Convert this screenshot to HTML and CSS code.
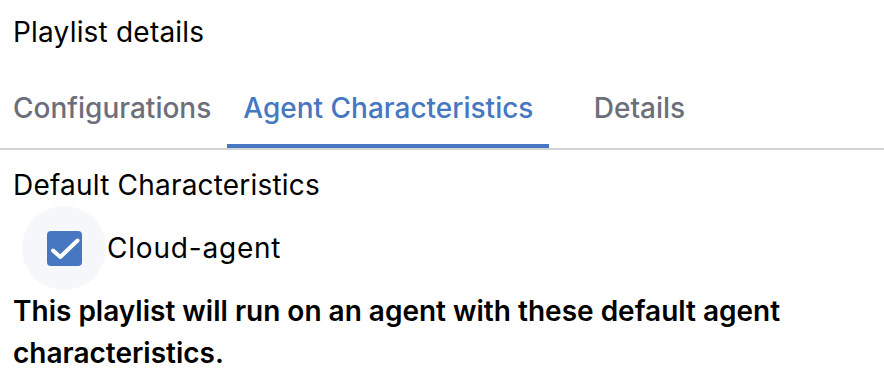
FILE: index.html
```html
<!DOCTYPE html>
<html lang="en">
<head>
    <meta charset="UTF-8">
    <meta name="viewport" content="width=device-width, initial-scale=1.0">
    <title>Playlist details</title>
    <link rel="stylesheet" href="styles.css">
</head>
<body>
    <div class="panel">
        <h1 class="title">Playlist details</h1>

        <div class="tabs">
            <div class="tab">Configurations</div>
            <div class="tab active">Agent Characteristics</div>
            <div class="tab">Details</div>
        </div>

        <div class="section">
            <div class="section-title">Default Characteristics</div>

            <label class="check-row">
                <span class="check-halo">
                    <span class="check-box">
                        <svg width="35" height="35" viewBox="0 0 35 35">
                            <path d="M6 19.5 L13.3 26 L30.5 9.5" fill="none" stroke="#fff" stroke-width="4" stroke-linecap="round" stroke-linejoin="round"/>
                        </svg>
                    </span>
                </span>
                <span class="check-label">Cloud-agent</span>
            </label>

            <p class="note">This playlist will run on an agent with these default agent characteristics.</p>
        </div>
    </div>
</body>
</html>
```

FILE: styles.css
```css
* {
    margin: 0;
    padding: 0;
    box-sizing: border-box;
}

body {
    font-family: Inter, 'Noto Sans', sans-serif;
    background: #ffffff;
    color: #000000;
    overflow: hidden;
}

.panel {
    padding: 16px 0 0 13px;
}

.title {
    font-size: 28px;
    font-weight: 400;
    line-height: 32px;
    letter-spacing: 0.2px;
}

.tabs {
    display: flex;
    margin: 20px 0 0 -29px;
    padding-left: 13px;
    border-bottom: 2px solid #d3d4d9;
}

.tab {
    height: 80px;
    min-width: 180px;
    padding: 0 16px;
    display: flex;
    align-items: center;
    justify-content: center;
    font-size: 28px;
    font-weight: 500;
    color: #6c6f7b;
}

.tab.active {
    color: #4677c0;
    box-shadow: inset 0 -4px 0 #4677c0;
}

.section {
    padding-top: 19px;
}

.section-title {
    font-size: 28px;
    line-height: 32px;
    letter-spacing: 0.2px;
}

.check-row {
    display: flex;
    align-items: center;
    margin: 5px 0 0 9px;
}

.check-halo {
    width: 84px;
    height: 84px;
    border-radius: 50%;
    background: #f6f7fa;
    display: flex;
    align-items: center;
    justify-content: center;
}

.check-box {
    width: 35px;
    height: 35px;
    border-radius: 4px;
    background: #4677c0;
    display: flex;
}

.check-label {
    font-size: 28px;
    margin-left: 1px;
    line-height: 32px;
    letter-spacing: 0.8px;
}

.note {
    font-size: 28px;
    font-weight: 600;
    line-height: 42px;
    max-width: 820px;
}
```
